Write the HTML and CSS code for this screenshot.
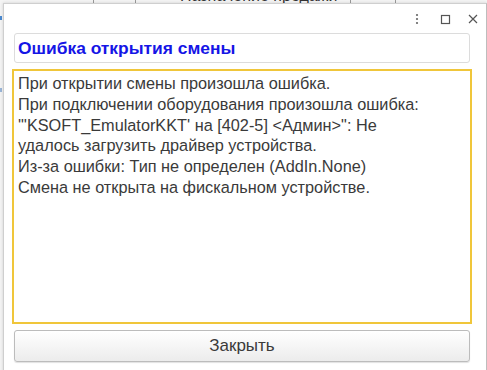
FILE: index.html
```html
<!DOCTYPE html>
<html lang="ru">
<head>
<meta charset="utf-8">
<link rel="stylesheet" href="styles.css">
</head>
<body>
<div class="backdrop">
  <span class="bg-line l1"></span>
  <span class="bg-line l2"></span>
  <span class="bg-line l3"></span>
  <span class="bg-line l4"></span>
  <span class="bg-title">Назначение продажи</span>
  <span class="bg-mark m1"></span>
  <span class="bg-mark m2"></span>
</div>
<div class="dialog">
  <div class="titlebar">
    <svg class="tb-icon" width="12" height="12" viewBox="0 0 12 12"><circle cx="6" cy="2" r="1.1" fill="#666"/><circle cx="6" cy="6" r="1.1" fill="#666"/><circle cx="6" cy="10" r="1.1" fill="#666"/></svg>
    <svg class="tb-icon" width="12" height="12" viewBox="0 0 12 12"><rect x="2.5" y="2.5" width="8" height="8" fill="none" stroke="#555" stroke-width="1.2"/></svg>
    <svg class="tb-icon" width="12" height="12" viewBox="0 0 12 12"><path d="M2 2 L10 10 M10 2 L2 10" stroke="#555" stroke-width="1.2" fill="none"/></svg>
  </div>
  <div class="content">
    <div class="header-field">Ошибка открытия смены</div>
    <div class="message">При открытии смены произошла ошибка.<br>При подключении оборудования произошла ошибка:<br>'"KSOFT_EmulatorKKT' на [402-5] &lt;Админ&gt;": Не<br>удалось загрузить драйвер устройства.<br>Из-за ошибки: Тип не определен (AddIn.None)<br>Смена не открыта на фискальном устройстве.</div>
    <button class="close-btn">Закрыть</button>
  </div>
</div>
</body>
</html>
```

FILE: styles.css
```css
html, body {
  margin: 0;
  padding: 0;
}
body {
  width: 487px;
  height: 370px;
  overflow: hidden;
  position: relative;
  background: #f4f4f4;
  font-family: "Liberation Sans", Arial, sans-serif;
  padding: 3px 0 0 3px;
  box-sizing: border-box;
}
.backdrop {
  position: absolute;
  inset: 0;
  z-index: 0;
}
.bg-line {
  position: absolute;
  top: 0;
  width: 1px;
  height: 4px;
  background: #9a9a9a;
}
.l1 { left: 93px; }
.l2 { left: 135px; }
.l3 { left: 350px; }
.l4 { left: 395px; }
.bg-title {
  position: absolute;
  left: 180px;
  top: -13px;
  font-size: 16px;
  color: #333;
  white-space: nowrap;
}
.bg-mark {
  position: absolute;
  left: 0;
  width: 2px;
  height: 4px;
}
.m1 { top: 16px; background: #4a8ad0; }
.m2 { top: 88px; background: #9bb6d8; }
.dialog {
  position: relative;
  z-index: 1;
  width: 484px;
  height: 380px;
  background: #fff;
  border: 1px solid #cfcfcf;
  border-right-color: #bdbdbd;
  box-sizing: border-box;
  box-shadow: 0 0 3px rgba(0,0,0,0.15);
}
.titlebar {
  height: 29px;
  display: flex;
  justify-content: flex-end;
  align-items: center;
  gap: 16px;
  padding-right: 7px;
}
.tb-icon {
  display: block;
}
.content {
  padding: 0 14px 0 8px;
  display: flex;
  flex-direction: column;
}
.header-field {
  margin: 0 0 0 2px;
  height: 30px;
  border: 1px solid #dcdcdc;
  border-radius: 3px;
  box-sizing: border-box;
  display: flex;
  align-items: center;
  padding-left: 3px;
  padding-top: 1px;
  font-weight: bold;
  font-size: 17.4px;
  color: #1515e6;
  margin-right: 2px;
}
.message {
  margin-top: 6px;
  height: 255px;
  border: 2px solid #f0c63a;
  box-sizing: border-box;
  padding: 2px 4px;
  font-size: 16.3px;
  line-height: 20.8px;
  color: #3a3a3a;
}
.close-btn {
  margin: 6px 2px 0 2px;
  height: 32px;
  border: 1px solid #bcbcbc;
  border-radius: 3px;
  background: linear-gradient(#ffffff, #ececec);
  font-family: "Liberation Sans", Arial, sans-serif;
  font-size: 17px;
  color: #3a3a3a;
  box-shadow: 0 1px 1px rgba(0,0,0,0.12);
}
```
